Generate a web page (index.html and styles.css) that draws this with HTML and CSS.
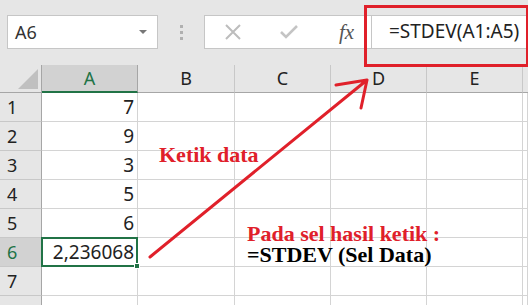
FILE: index.html
```html
<!DOCTYPE html>
<html lang="id">
<head>
    <meta charset="UTF-8">
    <title>STDEV</title>
    <link rel="stylesheet" href="styles.css">
</head>
<body>
    <div class="toolbar">
        <div class="namebox">
            <span>A6</span>
            <span class="caret"></span>
        </div>
        <div class="grip"><i></i><i></i><i></i></div>
        <div class="formula">
            <svg class="ico" width="20" height="20" viewBox="0 0 20 20"><path d="M3 3 L17 17 M17 3 L3 17" stroke="#bdbdbd" stroke-width="2" fill="none"/></svg>
            <svg class="ico" width="20" height="20" viewBox="0 0 20 20"><path d="M2 10 L7 15 L18 4" stroke="#c4c4c4" stroke-width="2.6" fill="none"/></svg>
            <span class="fx">fx</span>
            <div class="input">=STDEV(A1:A5)</div>
        </div>
    </div>

    <div class="sheet">
        <div class="corner"><span class="tri"></span></div>
        <div class="colhead sel">A</div>
        <div class="colhead">B</div>
        <div class="colhead">C</div>
        <div class="colhead">D</div>
        <div class="colhead">E</div>
        <div class="colhead last"></div>

        <div class="rowhead">1</div><div class="cell num">7</div><div class="cell"></div><div class="cell"></div><div class="cell"></div><div class="cell"></div><div class="cell"></div>
        <div class="rowhead">2</div><div class="cell num">9</div><div class="cell"></div><div class="cell"></div><div class="cell"></div><div class="cell"></div><div class="cell"></div>
        <div class="rowhead">3</div><div class="cell num">3</div><div class="cell"></div><div class="cell"></div><div class="cell"></div><div class="cell"></div><div class="cell"></div>
        <div class="rowhead">4</div><div class="cell num">5</div><div class="cell"></div><div class="cell"></div><div class="cell"></div><div class="cell"></div><div class="cell"></div>
        <div class="rowhead">5</div><div class="cell num">6</div><div class="cell"></div><div class="cell"></div><div class="cell"></div><div class="cell"></div><div class="cell"></div>
        <div class="rowhead sel">6</div><div class="cell num active">2,236068<span class="handle"></span></div><div class="cell"></div><div class="cell"></div><div class="cell"></div><div class="cell"></div><div class="cell"></div>
        <div class="rowhead">7</div><div class="cell"></div><div class="cell"></div><div class="cell"></div><div class="cell"></div><div class="cell"></div><div class="cell"></div>
        <div class="rowhead"></div><div class="cell"></div><div class="cell"></div><div class="cell"></div><div class="cell"></div><div class="cell"></div><div class="cell"></div>
    </div>

    <!-- annotations drawn over the sheet -->
    <div class="redbox"></div>
    <svg class="arrow" width="528" height="305" viewBox="0 0 528 305">
        <path d="M150 257 L367 80 M367 80 L336 85 M367 80 L361 108" stroke="#e0202a" stroke-width="3" fill="none" stroke-linecap="round"/>
    </svg>
    <div class="note note-ketik">Ketik data</div>
    <div class="note note-pada">
        <div class="red">Pada sel hasil ketik :</div>
        <div>=STDEV (Sel Data)</div>
    </div>
</body>
</html>
```

FILE: styles.css
```css
* { box-sizing: border-box; }
body {
    margin: 0;
    width: 528px;
    height: 305px;
    overflow: hidden;
    background: #e6e6e6;
    font-family: 'Noto Sans', 'Open Sans', sans-serif;
    color: #222;
    position: relative;
}
.toolbar {
    height: 65px;
    display: flex;
    align-items: flex-start;
    padding-top: 15px;
    padding-left: 7px;
}
.namebox {
    width: 151px;
    height: 34px;
    background: #fff;
    border: 1px solid #c6c6c6;
    display: flex;
    align-items: center;
    justify-content: space-between;
    padding: 0 10px 0 7px;
    font-size: 18px;
    color: #333;
}
.caret {
    width: 0;
    height: 0;
    border-left: 4px solid transparent;
    border-right: 4px solid transparent;
    border-top: 4px solid #777;
}
.grip {
    width: 46px;
    height: 34px;
    display: flex;
    flex-direction: column;
    align-items: center;
    justify-content: center;
    gap: 3px;
}
.grip i {
    width: 3px;
    height: 3px;
    background: #b0b0b0;
}
.formula {
    flex: 1;
    height: 34px;
    background: #fff;
    border: 1px solid #c6c6c6;
    border-right: none;
    display: flex;
    align-items: center;
    padding-left: 18px;
}
.ico { margin-right: 36px; }
.ico + .ico { margin-right: 40px; }
.fx {
    font-family: 'Liberation Serif', 'Times New Roman', 'DejaVu Serif', serif;
    font-style: italic;
    font-size: 21px;
    color: #555;
    width: 32px;
}
.input {
    flex: 1;
    height: 34px;
    border-left: 1px solid #c6c6c6;
    padding-left: 17px;
    font-size: 19px;
    line-height: 32px;
    color: #222;
    white-space: nowrap;
    overflow: hidden;
}
.sheet {
    display: grid;
    grid-template-columns: 42px 96px 97px 96px 96px 96px 5px;
    grid-template-rows: 28px repeat(8, 29px);
    background: #fff;
}
.corner {
    background: #e6e6e6;
    border-right: 1px solid #a6a6a6;
    border-bottom: 1px solid #a6a6a6;
    position: relative;
}
.tri {
    position: absolute;
    right: 3px;
    bottom: 3px;
    width: 0;
    height: 0;
    border-left: 20px solid transparent;
    border-bottom: 20px solid #c0c0c0;
}
.colhead {
    background: #e6e6e6;
    border-right: 1px solid #c8c8c8;
    border-bottom: 1px solid #a6a6a6;
    text-align: center;
    font-size: 18px;
    line-height: 27px;
    color: #222;
}
.colhead.sel {
    background: #d2d2d2;
    color: #217346;
    border-bottom: 2px solid #217346;
    border-right-color: #a6a6a6;
}
.colhead.last { border-right: none; }
.rowhead {
    background: #e6e6e6;
    border-right: 1px solid #a6a6a6;
    border-bottom: 1px solid #c8c8c8;
    padding-left: 7px;
    font-size: 18px;
    line-height: 28px;
    color: #222;
}
.rowhead.sel {
    background: #d2d2d2;
    color: #217346;
}
.cell {
    border-right: 1px solid #d4d4d4;
    border-bottom: 1px solid #d4d4d4;
    font-size: 19px;
    line-height: 28px;
}
.cell.num {
    text-align: right;
    padding-right: 3px;
}
.cell.active {
    border: 2px solid #217346;
    margin: -1px 0 0 -1px;
    line-height: 26px;
    padding-right: 2px;
    position: relative;
    overflow: visible;
}
.handle {
    position: absolute;
    right: -4px;
    bottom: -4px;
    width: 6px;
    height: 6px;
    background: #217346;
    border: 1px solid #fff;
}
.redbox {
    position: absolute;
    left: 364px;
    top: 5px;
    width: 165px;
    height: 62px;
    border: 3px solid #e0202a;
}
.arrow {
    position: absolute;
    left: 0;
    top: 0;
}
.note {
    position: absolute;
    font-family: 'Liberation Serif', 'Times New Roman', 'DejaVu Serif', serif;
    font-weight: bold;
    font-size: 22px;
    color: #000;
    white-space: nowrap;
}
.note-ketik {
    left: 159px;
    top: 142px;
    color: #e0202a;
}
.note-pada {
    left: 247px;
    top: 223px;
    line-height: 21px;
}
.note-pada .red { color: #e0202a; }
```
